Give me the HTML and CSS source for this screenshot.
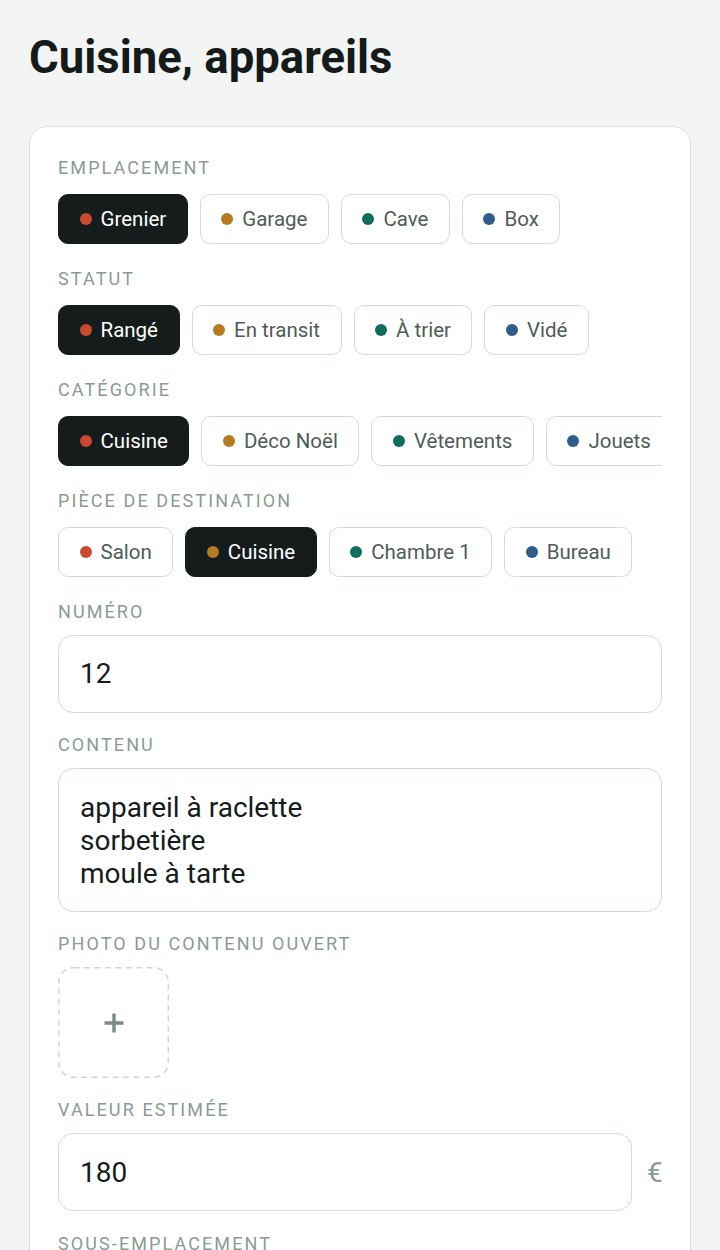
FILE: index.html
```html
<!DOCTYPE html>
<html lang="fr">
<head>
<meta charset="utf-8">
<title>Cuisine, appareils</title>
<link rel="stylesheet" href="styles.css">
</head>
<body>
<main class="page">
  <h1 class="title">Cuisine, appareils</h1>
  <section class="card">
    <div class="field">
      <div class="label">Emplacement</div>
      <div class="chips">
        <span class="chip active"><i class="dot red"></i>Grenier</span>
        <span class="chip"><i class="dot amber"></i>Garage</span>
        <span class="chip"><i class="dot teal"></i>Cave</span>
        <span class="chip"><i class="dot blue"></i>Box</span>
      </div>
    </div>
    <div class="field">
      <div class="label">Statut</div>
      <div class="chips">
        <span class="chip active"><i class="dot red"></i>Rangé</span>
        <span class="chip"><i class="dot amber"></i>En transit</span>
        <span class="chip"><i class="dot teal"></i>À trier</span>
        <span class="chip"><i class="dot blue"></i>Vidé</span>
      </div>
    </div>
    <div class="field">
      <div class="label">Catégorie</div>
      <div class="chips">
        <span class="chip active"><i class="dot red"></i>Cuisine</span>
        <span class="chip"><i class="dot amber"></i>Déco Noël</span>
        <span class="chip"><i class="dot teal"></i>Vêtements</span>
        <span class="chip"><i class="dot blue"></i>Jouets</span>
        <span class="chip"><i class="dot red"></i>Livres</span>
      </div>
    </div>
    <div class="field">
      <div class="label">Pièce de destination</div>
      <div class="chips">
        <span class="chip"><i class="dot red"></i>Salon</span>
        <span class="chip active"><i class="dot amber"></i>Cuisine</span>
        <span class="chip"><i class="dot teal"></i>Chambre 1</span>
        <span class="chip"><i class="dot blue"></i>Bureau</span>
      </div>
    </div>
    <div class="field">
      <div class="label">Numéro</div>
      <input class="input" type="text" value="12">
    </div>
    <div class="field">
      <div class="label">Contenu</div>
      <textarea class="input area">appareil à raclette
sorbetière
moule à tarte</textarea>
    </div>
    <div class="field">
      <div class="label">Photo du contenu ouvert</div>
      <div class="photo">
        <svg class="photo-frame" viewBox="0 0 111 111" aria-hidden="true">
          <rect x="0.75" y="0.75" width="109.5" height="109.5" rx="14.5" ry="14.5" fill="none" stroke="#cfd6d3" stroke-width="1.5" stroke-dasharray="6 4.5"/>
        </svg>
        <svg class="plus" width="20" height="20" viewBox="0 0 20 20" aria-hidden="true">
          <path d="M10 0.5V19.5M0.5 10H19.5" stroke="currentColor" stroke-width="3.4" fill="none"/>
        </svg>
      </div>
    </div>
    <div class="field">
      <div class="label">Valeur estimée</div>
      <div class="money">
        <input class="input" type="text" value="180">
        <span class="currency">€</span>
      </div>
    </div>
    <div class="field">
      <div class="label">Sous-emplacement</div>
      <div class="chips">
        <span class="chip active"><i class="dot red"></i>Étagère</span>
        <span class="chip"><i class="dot amber"></i>Carton</span>
      </div>
    </div>
  </section>
</main>
</body>
</html>
```
FILE: styles.css
```css
* { box-sizing: border-box; }

html, body {
  margin: 0;
  background: #f3f5f4;
}

body {
  font-family: Roboto, "Liberation Sans", sans-serif;
  color: #151c1b;
}

.page {
  padding: 30.5px 29px 40px;
}

.title {
  margin: 0 0 41.5px;
  font-size: 45.5px;
  line-height: 54px;
  font-weight: 700;
  color: #141b1a;
}

.card {
  background: #ffffff;
  border: 1.5px solid #d9e0de;
  border-radius: 18px;
  padding: 30px 28px 40px;
  display: flex;
  flex-direction: column;
  gap: 21.4px;
}

.field {
  display: flex;
  flex-direction: column;
  min-width: 0;
}

.label {
  font-size: 18px;
  line-height: 21.6px;
  letter-spacing: 2.1px;
  text-transform: uppercase;
  color: #8b9a95;
  margin-bottom: 12px;
}

.chips {
  display: flex;
  gap: 12px;
  padding: 3px 0;
  overflow: hidden;
  white-space: nowrap;
}

.chip {
  flex: none;
  display: inline-flex;
  align-items: center;
  gap: 9px;
  height: 50px;
  padding: 0 20.5px;
  border: 1.5px solid #d3dcd9;
  border-radius: 10px;
  background: #ffffff;
  font-size: 20.5px;
  color: #4f5b58;
}

.chip.active {
  background: #151c1b;
  border-color: #151c1b;
  color: #ffffff;
}

.dot {
  width: 12px;
  height: 12px;
  border-radius: 50%;
  flex: none;
}

.red { background: #c94a30; }
.amber { background: #b77a1f; }
.teal { background: #116e5e; }
.blue { background: #2e5d8b; }

.input {
  display: block;
  width: 100%;
  height: 78.5px;
  margin: 0;
  padding: 0 21px;
  border: 1.5px solid #d3dcd9;
  border-radius: 15px;
  background: #ffffff;
  font-family: Roboto, "Liberation Sans", sans-serif;
  font-size: 28px;
  color: #151c1b;
  outline: none;
}

.area {
  height: 144px;
  padding: 22px 21px 0;
  line-height: 33px;
  resize: none;
  overflow: hidden;
}

.photo {
  position: relative;
  width: 111px;
  height: 111px;
  display: flex;
  align-items: center;
  justify-content: center;
  color: #7a8a85;
}

.photo-frame {
  position: absolute;
  inset: 0;
  width: 100%;
  height: 100%;
}

.plus { display: block; }

.money {
  display: flex;
  align-items: center;
  gap: 15px;
}

.money .input {
  flex: 1;
  width: auto;
  min-width: 0;
}

.currency {
  font-size: 28px;
  color: #8b9a95;
  width: 15px;
}
```
